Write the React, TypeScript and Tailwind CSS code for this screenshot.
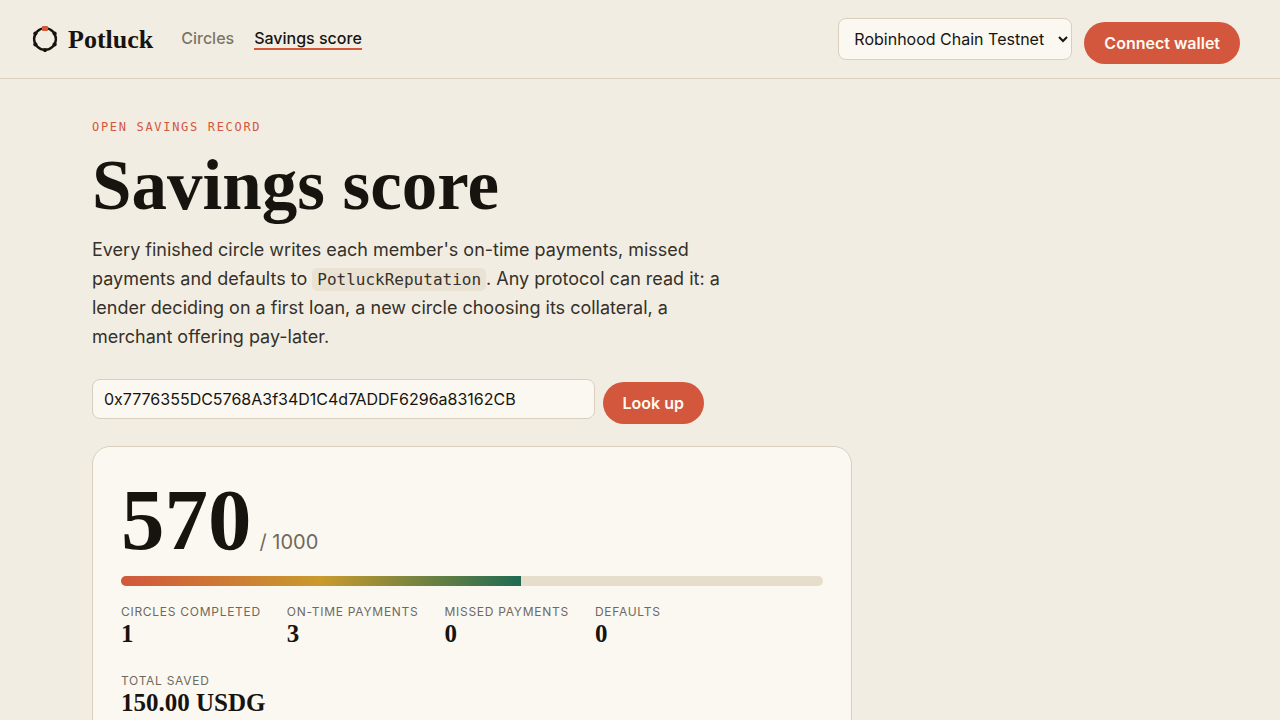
import { useState } from "react";

const stats = [
  { label: "Circles completed", value: "1" },
  { label: "On-time payments", value: "3" },
  { label: "Missed payments", value: "0" },
  { label: "Defaults", value: "0" },
  { label: "Total saved", value: "150.00 USDG" },
];

const Logo = () => (
  <svg width="26" height="26" viewBox="0 0 26 26" fill="none" aria-hidden="true">
    <circle cx="13" cy="13" r="10.9" stroke="#17140f" strokeWidth="2.4" />
    <g fill="#17140f">
      <circle cx="22.6" cy="7.6" r="2.1" />
      <circle cx="22.6" cy="18.4" r="2.1" />
      <circle cx="13" cy="24" r="2.1" />
      <circle cx="3.4" cy="18.4" r="2.1" />
      <circle cx="3.4" cy="7.6" r="2.1" />
    </g>
    <rect x="10" y="0" width="6" height="5" rx="1" fill="#d2573c" />
  </svg>
);

const Header = () => (
  <header className="border-b border-[#d9cfbc] py-[14px] pl-8 pr-10">
    <div className="flex h-[50px] items-center">
      <a href="#" className="flex items-center gap-[10px]">
        <Logo />
        <span className="pt-[2px] font-['Liberation_Serif',serif] text-[26px] font-bold leading-8">
          Potluck
        </span>
      </a>
      <nav className="ml-7 flex gap-5 text-base font-medium leading-5">
        <a href="#circles" className="border-b-2 border-transparent text-[#7b7567]">
          Circles
        </a>
        <a href="#score" className="border-b-2 border-[#d2573c]">
          Savings score
        </a>
      </nav>
      <div className="ml-auto flex items-center gap-3">
        <select
          aria-label="Network"
          className="h-[42px] w-[234px] rounded-lg border border-[#d9cfbc] bg-[#fbf8f1] pl-[11px] text-base"
        >
          <option>Robinhood Chain Testnet</option>
        </select>
        <button className="mt-2 h-[42px] rounded-full bg-[#d2573c] px-5 text-base font-semibold text-[#fffaf2]">
          Connect wallet
        </button>
      </div>
    </div>
  </header>
);

const ScoreCard = ({ score }: { score: number }) => (
  <section className="mt-[22px] max-w-[760px] rounded-[18px] border border-[#d9cfbc] bg-[#fbf8f1] p-7">
    <div className="flex items-baseline gap-2">
      <span className="font-['Liberation_Serif',serif] text-[87px] font-bold leading-[90px]">
        {score}
      </span>
      <span className="text-xl text-[#6f695d]">/ 1000</span>
    </div>
    <div className="mt-[11px] h-[10px] overflow-hidden rounded-full bg-[#e6ddcb]">
      <div
        className="h-full bg-[linear-gradient(90deg,#d2573c,#c99a2e,#1f6b52)]"
        style={{ width: `${score / 10}%` }}
      />
    </div>
    <dl className="mt-[17px] flex flex-wrap gap-[26px]">
      {stats.map((s) => (
        <div key={s.label}>
          <dt className="text-xs leading-[18px] uppercase tracking-[0.06em] text-[#6f695d]">
            {s.label}
          </dt>
          <dd className="font-['Liberation_Serif',serif] text-[25px] font-bold leading-[25px]">
            {s.value}
          </dd>
        </div>
      ))}
    </dl>
  </section>
);

const App = () => {
  const [address, setAddress] = useState("0x7776355DC5768A3f34D1C4d7ADDF6296a83162CB");

  return (
    <div className="min-h-screen bg-[#f2ede2] font-['Inter',sans-serif] text-[#17140f]">
      <Header />
      <main className="mx-auto max-w-[1160px] px-8 pt-[38px] pb-16">
        <p className="font-['DejaVu_Sans_Mono',monospace] text-xs leading-5 uppercase tracking-[0.14em] text-[#d2573c]">
          Open savings record
        </p>
        <h1 className="mt-3 font-['Liberation_Serif',serif] text-[71px] font-bold leading-[72px]">
          Savings score
        </h1>
        <p className="mt-[14px] max-w-[640px] text-lg leading-[29px] text-[#35312a]">
          Every finished circle writes each member's on-time payments, missed payments and defaults
          to{" "}
          <code className="rounded-[5px] bg-[#eae2d3] px-[5px] py-[2px] font-['DejaVu_Sans_Mono',monospace] text-base">
            PotluckReputation
          </code>
          . Any protocol can read it: a lender deciding on a first loan, a new circle choosing its
          collateral, a merchant offering pay-later.
        </p>
        <form
          className="mt-7 flex max-w-[612px] items-start gap-2"
          onSubmit={(e) => e.preventDefault()}
        >
          <input
            aria-label="Wallet address"
            value={address}
            onChange={(e) => setAddress(e.target.value)}
            className="h-10 min-w-0 flex-1 rounded-lg border border-[#d9cfbc] bg-[#fbf8f1] px-[11px] text-base"
          />
          <button className="mt-[3px] h-[42px] rounded-full bg-[#d2573c] px-5 text-base font-semibold text-[#fffaf2]">
            Look up
          </button>
        </form>
        <ScoreCard score={570} />
      </main>
    </div>
  );
};

export default App;
